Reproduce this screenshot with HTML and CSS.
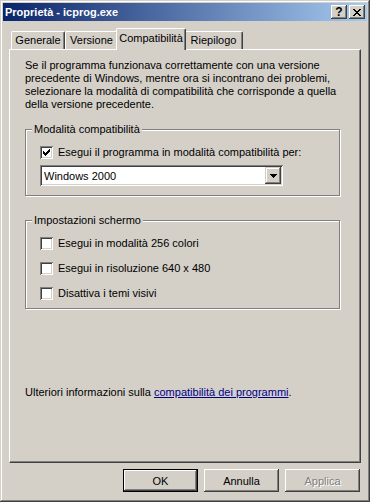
FILE: index.html
```html
<!DOCTYPE html>
<html lang="it">
<head>
    <meta charset="UTF-8">
    <title>Proprietà - icprog.exe</title>
    <link rel="stylesheet" href="styles.css">
</head>
<body>
    <div class="window">
        <div class="titlebar">
            <span class="title">Proprietà - icprog.exe</span>
            <div class="caption-buttons">
                <span class="cap-btn help">?</span>
                <span class="cap-btn close">
                    <svg width="8" height="7" viewBox="0 0 8 7" shape-rendering="crispEdges"><path d="M0 0h2v1h-2zM6 0h2v1h-2zM1 1h2v1h-2zM5 1h2v1h-2zM2 2h4v1h-4zM3 3h2v1h-2zM2 4h4v1h-4zM1 5h2v1h-2zM5 5h2v1h-2zM0 6h2v1h-2zM6 6h2v1h-2z" fill="#000"/></svg>
                </span>
            </div>
        </div>

        <div class="content">
            <ul class="tabs">
                <li class="tab tab-generale">Generale</li>
                <li class="tab tab-versione">Versione</li>
                <li class="tab tab-compat active">Compatibilità</li>
                <li class="tab tab-riepilogo">Riepilogo</li>
            </ul>

            <div class="panel">
                <p class="intro">
                    Se il programma funzionava correttamente con una versione<br>
                    precedente di Windows, mentre ora si incontrano dei problemi,<br>
                    selezionare la modalità di compatibilità che corrisponde a quella<br>
                    della versione precedente.
                </p>

                <div class="group group-mode">
                    <span class="group-label">Modalità compatibilità</span>
                    <label class="check">
                        <span class="box">
                            <svg width="13" height="13" viewBox="0 0 13 13" shape-rendering="crispEdges"><path d="M3 5h1v1h1v1h1v-1h1v-1h1v-1h1v-1h1v3h-1v1h-1v1h-1v1h-1v1h-1v-1h-1v-1h-1z" fill="#000"/></svg>
                        </span>
                        Esegui il programma in modalità compatibilità per:
                    </label>
                    <div class="combo">
                        <span class="combo-value">Windows 2000</span>
                        <span class="combo-btn">
                            <svg width="7" height="4" viewBox="0 0 7 4" shape-rendering="crispEdges"><path d="M0 0h7v1h-1v1h-1v1h-1v1h-1v-1h-1v-1h-1v-1h-1z" fill="#000"/></svg>
                        </span>
                    </div>
                </div>

                <div class="group group-screen">
                    <span class="group-label">Impostazioni schermo</span>
                    <label class="check"><span class="box"></span>Esegui in modalità 256 colori</label>
                    <label class="check"><span class="box"></span>Esegui in risoluzione 640 x 480</label>
                    <label class="check"><span class="box"></span>Disattiva i temi visivi</label>
                </div>

                <p class="more">Ulteriori informazioni sulla <a class="link" href="#">compatibilità dei programmi</a>.</p>
            </div>

            <div class="buttons">
                <button class="btn default">OK</button>
                <button class="btn">Annulla</button>
                <button class="btn" disabled>Applica</button>
            </div>
        </div>
    </div>
</body>
</html>
```

FILE: styles.css
```css
:root{
    --face : #d4d0c8;
    --shadow : #808080;
    --dark : #404040;
    --light : #fff;
}

*{
    padding: 0;
    margin: 0;
    box-sizing: border-box;
}

ul{
    list-style: none;
}

body{
    background: var(--face);
    font-family: "Liberation Sans", Arial, sans-serif;
    font-size: 11px;
    color: #000;
}

.window{
    width: 370px;
    height: 502px;
    padding: 3px;
    background: var(--face);
    box-shadow: inset -1px -1px var(--dark), inset 1px 1px var(--face),
                inset -2px -2px var(--shadow), inset 2px 2px var(--light);
}

.titlebar{
    height: 18px;
    display: flex;
    align-items: center;
    justify-content: space-between;
    padding: 0 2px 0 2px;
    background: linear-gradient(to right, #0a246a, #a6caf0);
}

.title{
    color: #fff;
    font-weight: bold;
    font-size: 11px;
}

.caption-buttons{
    display: flex;
    gap: 2px;
}

.cap-btn{
    width: 16px;
    height: 14px;
    display: flex;
    align-items: center;
    justify-content: center;
    background: var(--face);
    box-shadow: inset -1px -1px var(--dark), inset 1px 1px var(--light),
                inset -2px -2px var(--shadow);
}

.cap-btn.help{
    font-weight: bold;
    font-size: 12px;
    line-height: 14px;
    padding-bottom: 1px;
}

.content{
    padding: 7px 6px 0 6px;
}

.tabs{
    display: flex;
    align-items: flex-end;
    height: 21px;
    padding-left: 2px;
    position: relative;
    z-index: 1;
}

.tab{
    height: 18px;
    line-height: 17px;
    text-align: center;
    background: var(--face);
    border-top: 1px solid var(--light);
    border-left: 1px solid var(--light);
    border-right: 1px solid var(--dark);
    box-shadow: inset -1px 0 var(--shadow);
    border-radius: 2px 2px 0 0;
}

.tab-generale{ width: 54px; }
.tab-versione{ width: 53px; }
.tab-compat{ width: 70px; }
.tab-riepilogo{ width: 59px; }

.tab.active{
    height: 22px;
    line-height: 19px;
    margin: 0 -2px -1px -2px;
    position: relative;
}

.panel{
    height: 414px;
    padding: 9px 20px 0 15px;
    border-top: 1px solid var(--light);
    border-left: 1px solid var(--light);
    border-right: 1px solid var(--dark);
    border-bottom: 1px solid var(--dark);
    box-shadow: inset -1px -1px var(--shadow);
}

.intro{
    line-height: 13px;
}

.group{
    position: relative;
    margin-top: 18px;
    border: 1px solid var(--shadow);
    box-shadow: inset 1px 1px var(--light), 1px 1px var(--light);
    padding: 16px 0 0 14px;
}

.group-label{
    position: absolute;
    top: -7px;
    left: 6px;
    padding: 0 2px;
    line-height: 13px;
    background: var(--face);
}

.group-mode{
    padding-bottom: 9px;
}

.group-screen{
    margin-top: 24px;
    padding-bottom: 8px;
    display: flex;
    flex-direction: column;
    gap: 12px;
}

.check{
    display: flex;
    align-items: center;
    gap: 5px;
    height: 13px;
    line-height: 13px;
}

.box{
    width: 13px;
    height: 13px;
    flex: none;
    background: #fff;
    box-shadow: inset 1px 1px var(--shadow), inset -1px -1px var(--light),
                inset 2px 2px var(--dark), inset -2px -2px var(--face);
}

.box svg{
    display: block;
}

.combo{
    margin-top: 6px;
    width: 243px;
    height: 21px;
    display: flex;
    align-items: center;
    justify-content: space-between;
    padding: 2px;
    background: #fff;
    box-shadow: inset 1px 1px var(--shadow), inset -1px -1px var(--light),
                inset 2px 2px var(--dark), inset -2px -2px var(--face);
}

.combo-value{
    padding-left: 2px;
}

.combo-btn{
    width: 16px;
    height: 17px;
    display: flex;
    align-items: center;
    justify-content: center;
    background: var(--face);
    box-shadow: inset -1px -1px var(--dark), inset 1px 1px var(--face),
                inset -2px -2px var(--shadow), inset 2px 2px var(--light);
}

.more{
    margin-top: 77px;
    line-height: 13px;
}

.link,
.link:visited{
    color: #00008b;
}

.buttons{
    display: flex;
    justify-content: flex-end;
    gap: 6px;
    margin-top: 6px;
    padding-right: 1px;
}

.btn{
    width: 75px;
    height: 23px;
    font-family: inherit;
    font-size: 11px;
    color: #000;
    border: none;
    background: var(--face);
    box-shadow: inset -1px -1px var(--dark), inset 1px 1px var(--light),
                inset -2px -2px var(--shadow), inset 2px 2px var(--face);
}

.btn.default{
    border: 1px solid #000;
}

.btn:disabled{
    color: var(--shadow);
    text-shadow: 1px 1px var(--light);
}
```
